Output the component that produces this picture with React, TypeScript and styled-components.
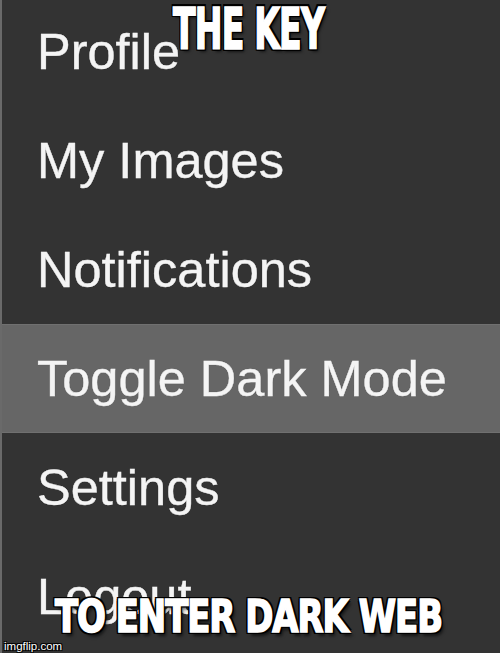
import React from 'react';
import styled, { createGlobalStyle } from 'styled-components';

const GlobalStyle = createGlobalStyle`
  html, body {
    margin: 0;
    padding: 0;
    background: #ffffff;
  }
`;

const items = ['Profile', 'My Images', 'Notifications', 'Toggle Dark Mode', 'Settings', 'Logout'];
const ACTIVE = 'Toggle Dark Mode';

const Frame = styled.div`
  position: relative;
  width: 500px;
  height: 658px;
  overflow: hidden;
  background: #ffffff;
`;

const Menu = styled.ul`
  list-style: none;
  margin: 0;
  padding: 0;
  height: 653px;
  overflow: hidden;
  background: #333333;
  border-left: 2px solid #6a6a6a;
  box-sizing: border-box;
  font-family: 'Liberation Sans', Arial, Helvetica, sans-serif;
`;

const Item = styled.li<{ active: boolean }>`
  height: 109px;
  line-height: 109px;
  padding-left: 35px;
  font-size: 50.5px;
  color: #f4f4f4;
  background: ${(p) => (p.active ? '#666666' : 'transparent')};
  box-shadow: ${(p) => (p.active ? 'inset 0 1px 0 #707070, inset 0 -1px 0 #707070' : 'none')};
  white-space: nowrap;
  -webkit-text-stroke: 0.4px #f4f4f4;
  text-shadow: 0 0 1px rgba(0, 0, 0, 0.4);

  &:first-child {
    margin-top: -3px;
  }
`;

const Caption = styled.div<{ top: number; left: number; size: number; sx: number; sy: number }>`
  position: absolute;
  top: ${(p) => p.top}px;
  left: ${(p) => p.left}px;
  font-family: Impact, 'DejaVu Sans Condensed', 'Liberation Sans Narrow', 'Liberation Sans', sans-serif;
  font-weight: 700;
  font-size: ${(p) => p.size}px;
  line-height: 1;
  color: #ffffff;
  white-space: nowrap;
  transform: scale(${(p) => p.sx}, ${(p) => p.sy});
  transform-origin: left top;
  letter-spacing: -1px;
  -webkit-text-stroke: 1.4px #ffffff;
  text-shadow:
    2px 2px 0 #000, -2px -2px 0 #000, 2px -2px 0 #000, -2px 2px 0 #000,
    0 2px 0 #000, 0 -2px 0 #000, 2px 0 0 #000, -2px 0 0 #000,
    3px 3px 3px rgba(0, 0, 0, 0.6);
`;

const Watermark = styled.div`
  position: absolute;
  left: 4px;
  bottom: 6px;
  font-family: 'Liberation Sans', Arial, sans-serif;
  font-size: 11.5px;
  line-height: 1;
  color: #ffffff;
  text-shadow: 1px 1px 0 #000, -1px -1px 0 #000, 1px -1px 0 #000, -1px 1px 0 #000;
`;

export default function App() {
  return (
    <>
      <GlobalStyle />
      <Frame>
        <Menu>
          {items.map((label) => (
            <Item key={label} active={label === ACTIVE}>
              {label}
            </Item>
          ))}
        </Menu>
        <Caption top={1} left={173} size={46} sx={0.8} sy={1.22}>
          THE KEY
        </Caption>
        <Caption top={594} left={55} size={38} sx={0.99} sy={1.19}>
          TO ENTER DARK WEB
        </Caption>
        <Watermark>imgflip.com</Watermark>
      </Frame>
    </>
  );
}
